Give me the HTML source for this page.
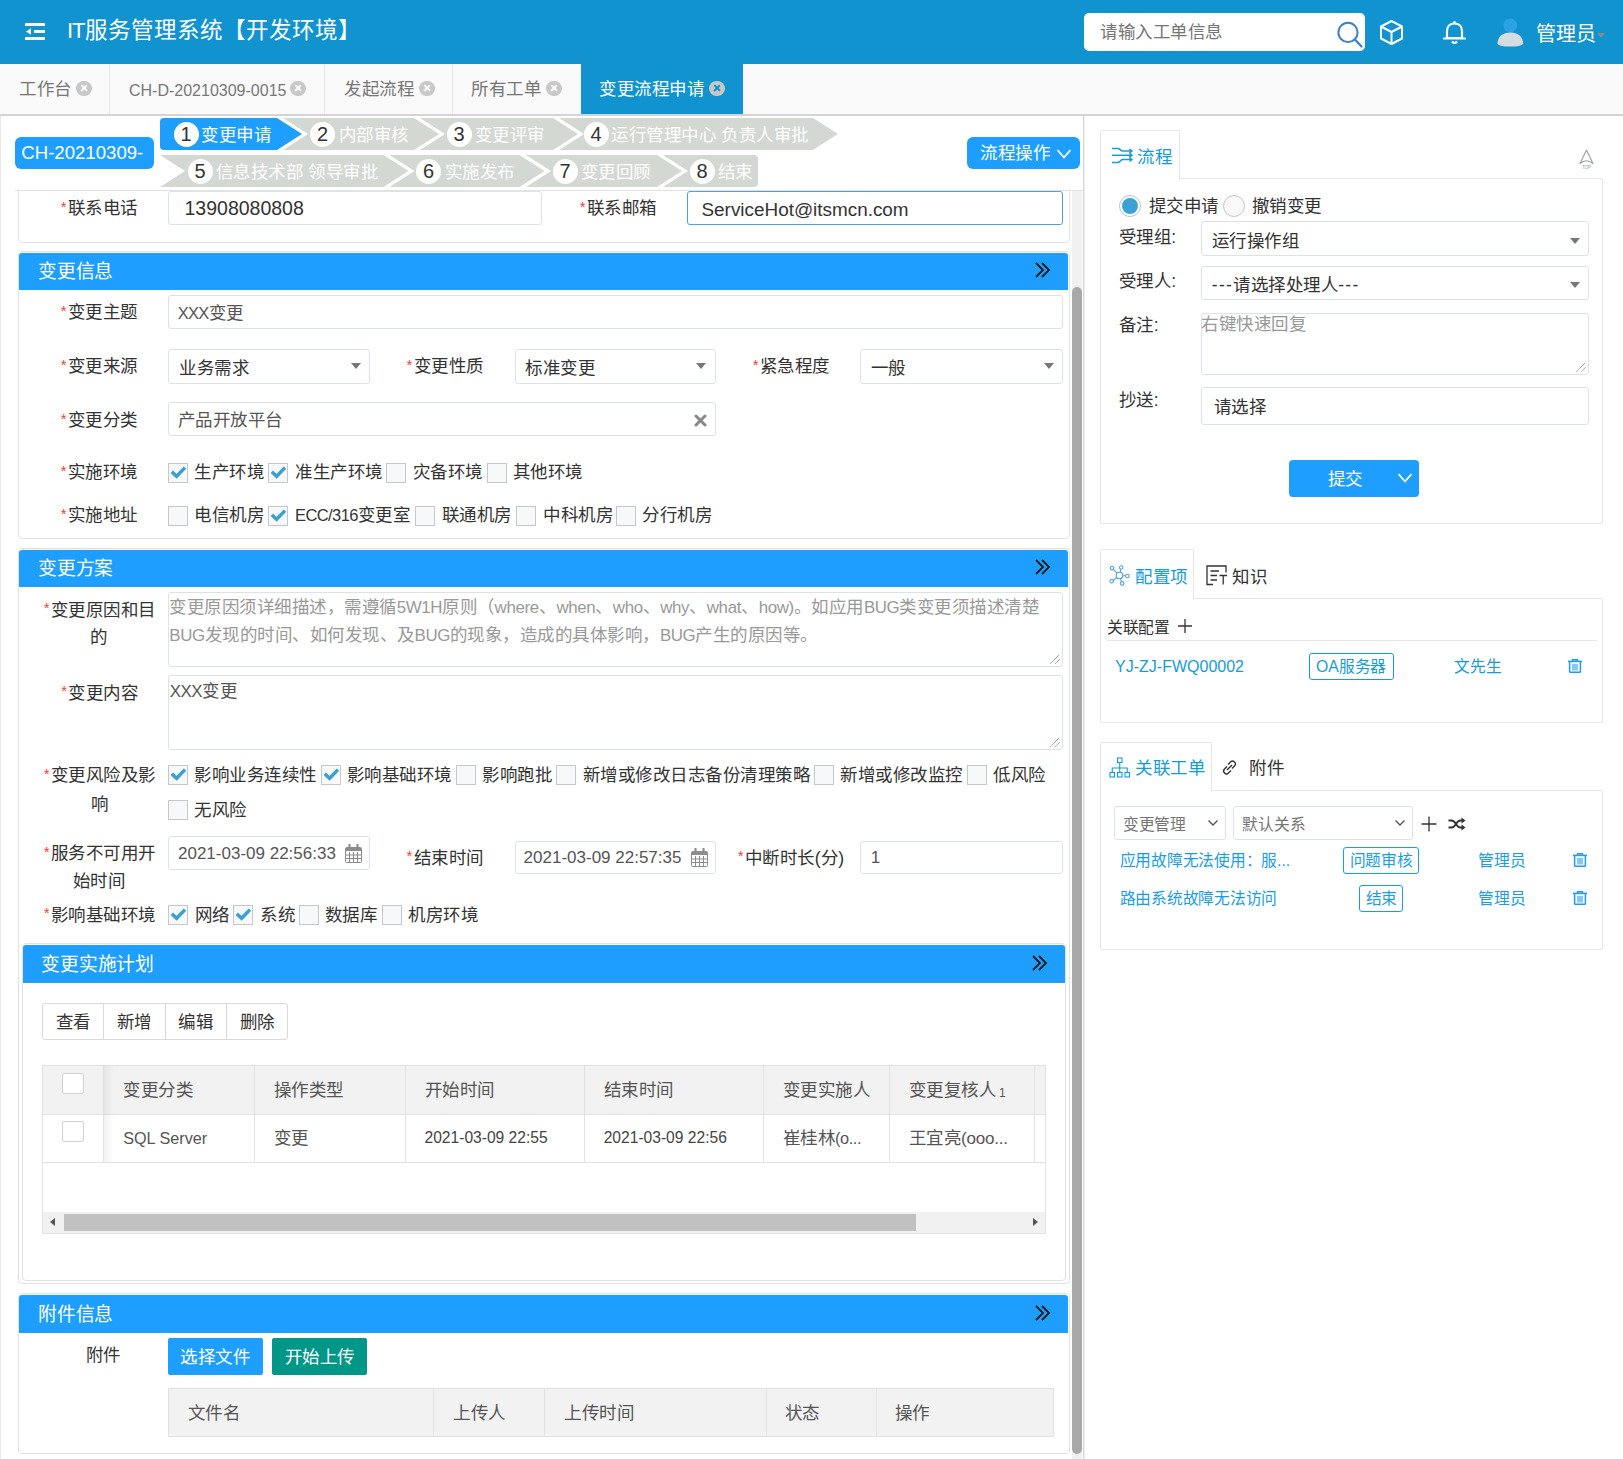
<!DOCTYPE html>
<html lang="zh-CN"><head><meta charset="utf-8">
<style>
*{box-sizing:border-box}
html,body{margin:0;padding:0}
body{width:1623px;height:1459px;position:relative;overflow:hidden;background:#fff;font-family:"Liberation Sans",sans-serif;color:#333}
.a{position:absolute;white-space:nowrap}
.t{position:absolute;white-space:nowrap;font-size:17.5px;line-height:24px;color:#333}
.hdr{left:0;top:0;width:1623px;height:64px;background:#1193cf}
.tabbar{left:0;top:64px;width:1623px;height:50px;background:#f8f8f8}
.tabline{left:0;top:114px;width:1623px;height:2px;background:#d4d4d4}
.tsep{top:64px;width:1px;height:50px;background:#e8e8e8}
.tabtxt{font-size:17.5px;line-height:24px;color:#777;top:77px}
.close{position:absolute;width:15.5px;height:15.5px;border-radius:50%;background:#c8c8c8;top:80.8px}
.close:before,.close:after{content:"";position:absolute;left:3.6px;top:6.6px;width:8.3px;height:2.3px;background:#fafafa;transform:rotate(45deg)}
.close.act:before,.close.act:after{background:#1193cf}
.close:after{transform:rotate(-45deg)}
.step{position:absolute;height:32px;background:#d3d8d3}
.circ{position:absolute;width:25px;height:25px;border-radius:50%;background:#fff;color:#333;font-size:20px;line-height:25px;text-align:center;top:3.5px}
.stxt{position:absolute;top:4px;font-size:17.5px;line-height:24px;color:#fff}
.box{position:absolute;border:1px solid #e2e2e2;border-radius:4px;background:#fff}
.sech{position:absolute;height:37px;background:#1e9fff;border-radius:3px 3px 0 0}
.sect{position:absolute;top:6px;font-size:18.75px;line-height:25px;color:#fff}
.dbl{position:absolute;top:9px;width:18px;height:18px}
.inp{position:absolute;border:1px solid #dce3e8;border-radius:3px;background:#fff}
.lbl{position:absolute;font-size:17.5px;line-height:24px;color:#333;text-align:center;white-space:nowrap}
.req{color:#ff2828;font-size:13px;vertical-align:top;position:relative;top:-1px;margin-right:1px}
.cb{position:absolute;width:20px;height:20px;border:1px solid #c2c8ce;background:#f6f8fa}
.caret{position:absolute;width:0;height:0;border-left:5px solid transparent;border-right:5px solid transparent;border-top:6px solid #777}
.ph{color:#999}

</style></head>
<body>
<div class="a" style="left:0px;top:0px;width:1623.00px;height:64.00px;background:#1193cf"></div>
<svg class="a" style="left:25px;top:22px" width="21" height="19" viewBox="0 0 21 19">
<rect x="0" y="1" width="20" height="3" fill="#fff"/>
<rect x="9" y="8" width="11" height="3" fill="#fff"/>
<rect x="0" y="15" width="20" height="3" fill="#fff"/>
<path d="M1 9.5 L6 6.3 L6 12.7 Z" fill="#fff"/>
</svg>
<div class="a" style="left:67px;top:16px;font-size:22.5px;line-height:30px;color:#fff"><span style="font-size:22px;letter-spacing:-1.2px">IT</span><span style="margin-left:1px">服务管理系统【开发环境】</span></div>
<div class="a" style="left:1084px;top:13px;width:281.00px;height:37.50px;background:#fff;border-radius:5px"></div>
<div class="a" style="left:1100px;top:20.00px;font-size:17.5px;line-height:24px;color:#757575;letter-spacing:0.5px;">请输入工单信息</div>
<svg class="a" style="left:1334px;top:19px" width="30" height="30" viewBox="0 0 30 30">
<circle cx="14" cy="13.4" r="9.6" fill="none" stroke="#3f7ec4" stroke-width="2"/>
<line x1="21" y1="20.6" x2="27.5" y2="27.5" stroke="#3f7ec4" stroke-width="2.2" stroke-linecap="round"/>
</svg>
<svg class="a" style="left:1378px;top:19px" width="27" height="27" viewBox="0 0 27 27">
<path d="M13.5 2 L24 7.5 L24 19.5 L13.5 25 L3 19.5 L3 7.5 Z M3 7.5 L13.5 13 L24 7.5 M13.5 13 L13.5 25" fill="none" stroke="#fff" stroke-width="2" stroke-linejoin="round"/>
</svg>
<svg class="a" style="left:1441px;top:19px" width="27" height="27" viewBox="0 0 27 27">
<path d="M6 19 L6 12 C6 7.5 9 4.5 13.5 4.5 C18 4.5 21 7.5 21 12 L21 19 Z" fill="none" stroke="#fff" stroke-width="2.2" stroke-linejoin="round"/>
<line x1="3" y1="19.5" x2="24" y2="19.5" stroke="#fff" stroke-width="2.2" stroke-linecap="round"/>
<path d="M11 22.5 Q13.5 25.5 16 22.5" fill="none" stroke="#fff" stroke-width="2"/>
<line x1="13.5" y1="2" x2="13.5" y2="4.5" stroke="#fff" stroke-width="2"/>
</svg>
<svg class="a" style="left:1496px;top:16px" width="30" height="32" viewBox="0 0 30 32">
<circle cx="14.3" cy="9.5" r="6.9" fill="#2aa3e6"/>
<path d="M1.5 27.5 Q2 16.8 14.3 16.4 Q26.6 16.8 27.2 27.5 Q27 30.6 14.3 30.6 Q1.6 30.6 1.5 27.5 Z" fill="#d5dde0"/>
</svg>
<div class="a" style="left:1536px;top:19.8px;font-size:20px;line-height:28px;color:#fff">管理员</div>
<div class="caret" style="left:1597px;top:33px;border-top-color:#8a8a8a;border-left-width:4px;border-right-width:4px;border-top-width:5px"></div>
<div class="a" style="left:0px;top:64px;width:1623.00px;height:50.00px;background:#fafafa"></div>
<div class="a" style="left:0px;top:114px;width:1623.00px;height:2.00px;background:#d4d4d4"></div>
<div class="a" style="left:109px;top:64px;width:1.00px;height:50.00px;background:#e8e8e8"></div>
<div class="a" style="left:324px;top:64px;width:1.00px;height:50.00px;background:#e8e8e8"></div>
<div class="a" style="left:452px;top:64px;width:1.00px;height:50.00px;background:#e8e8e8"></div>
<div class="a" style="left:19px;top:77.10px;font-size:17.5px;line-height:24px;color:#777;letter-spacing:0.5px;">工作台</div>
<div class="close" style="left:76px"></div>
<div class="a" style="left:129px;top:78.60px;font-size:16px;line-height:24px;color:#777;">CH-D-20210309-0015</div>
<div class="close" style="left:290px"></div>
<div class="a" style="left:344px;top:77.10px;font-size:17.5px;line-height:24px;color:#777;letter-spacing:0.5px;">发起流程</div>
<div class="close" style="left:419px"></div>
<div class="a" style="left:471px;top:77.10px;font-size:17.5px;line-height:24px;color:#777;letter-spacing:0.5px;">所有工单</div>
<div class="close" style="left:546px"></div>
<div class="a" style="left:581px;top:64px;width:162.00px;height:50.00px;background:#1193cf"></div>
<div class="a" style="left:599px;top:77.10px;font-size:17.5px;line-height:24px;color:#fff;letter-spacing:0.5px;">变更流程申请</div>
<div class="close act" style="left:709px"></div>
<div class="a" style="left:0px;top:116px;width:1.00px;height:1343.00px;background:#e8e8e8"></div>
<div class="a" style="left:1083px;top:116px;width:1.00px;height:1343.00px;background:#d6d6d6"></div>
<div class="a" style="left:1084px;top:116px;width:1.00px;height:1343.00px;background:#f0f0f0"></div>
<div class="a" style="left:15px;top:137px;width:139.00px;height:32.00px;background:#1e9fff;border-radius:6px"></div>
<div class="a" style="left:21.3px;top:141px;font-size:18.6px;line-height:24px;color:#fff">CH-20210309-</div>
<div class="a" style="left:967px;top:137px;width:113.00px;height:32.00px;background:#1e9fff;border-radius:6px"></div>
<div class="a" style="left:980px;top:140.80px;font-size:17.5px;line-height:24px;color:#fff;letter-spacing:0.5px;">流程操作</div>
<svg class="a" style="left:1056px;top:148px" width="16" height="12" viewBox="0 0 16 12"><path d="M1.5 2 L8 9.5 L14.5 2" fill="none" stroke="#fff" stroke-width="1.8"/></svg>
<svg class="a" style="left:0;top:0" width="900" height="200" viewBox="0 0 900 200">
<path d="M164 118 L277 118 L302 134 L277 150 L164 150 Q160 150 160 146 L160 122 Q160 118 164 118 Z" fill="#1e9fff"/>
<path d="M283 118 L414 118 L439 134 L414 150 L283 150 L308 134 Z" fill="#d3d8d3"/>
<path d="M420 118 L553 118 L578 134 L553 150 L420 150 L445 134 Z" fill="#d3d8d3"/>
<path d="M559 118 L813 118 L838 134 L813 150 L559 150 L584 134 Z" fill="#d3d8d3"/>
<path d="M160 155 L383.5 155 L408.5 171 L383.5 187 L160 187 L185 171 Z" fill="#d3d8d3"/>
<path d="M389.5 155 L519.5 155 L544.5 171 L519.5 187 L389.5 187 L414.5 171 Z" fill="#d3d8d3"/>
<path d="M526 155 L657 155 L682 171 L657 187 L526 187 L551 171 Z" fill="#d3d8d3"/>
<path d="M663 155 L754 155 Q758 155 758 159 L758 183 Q758 187 754 187 L663 187 L688 171 Z" fill="#d3d8d3"/>
</svg>
<div class="a" style="left:173.5px;top:121.5px;width:25px;height:25px;border-radius:50%;background:#fff;color:#333;font-size:20px;line-height:25px;text-align:center">1</div>
<div class="a" style="left:201px;top:123.00px;font-size:17.5px;line-height:24px;color:#fff;letter-spacing:0.5px;">变更申请</div>
<div class="a" style="left:310.0px;top:121.5px;width:25px;height:25px;border-radius:50%;background:#fff;color:#333;font-size:20px;line-height:25px;text-align:center">2</div>
<div class="a" style="left:338.5px;top:123.00px;font-size:17.5px;line-height:24px;color:#fff;letter-spacing:0.5px;">内部审核</div>
<div class="a" style="left:446.5px;top:121.5px;width:25px;height:25px;border-radius:50%;background:#fff;color:#333;font-size:20px;line-height:25px;text-align:center">3</div>
<div class="a" style="left:474.5px;top:123.00px;font-size:17.5px;line-height:24px;color:#fff;letter-spacing:0.5px;">变更评审</div>
<div class="a" style="left:583.5px;top:121.5px;width:25px;height:25px;border-radius:50%;background:#fff;color:#333;font-size:20px;line-height:25px;text-align:center">4</div>
<div class="a" style="left:611px;top:123.00px;font-size:17.5px;line-height:24px;color:#fff;letter-spacing:0.5px;">运行管理中心 负责人审批</div>
<div class="a" style="left:187.5px;top:158.5px;width:25px;height:25px;border-radius:50%;background:#fff;color:#333;font-size:20px;line-height:25px;text-align:center">5</div>
<div class="a" style="left:215.5px;top:160.00px;font-size:17.5px;line-height:24px;color:#fff;letter-spacing:0.5px;">信息技术部 领导审批</div>
<div class="a" style="left:416.0px;top:158.5px;width:25px;height:25px;border-radius:50%;background:#fff;color:#333;font-size:20px;line-height:25px;text-align:center">6</div>
<div class="a" style="left:444.5px;top:160.00px;font-size:17.5px;line-height:24px;color:#fff;letter-spacing:0.5px;">实施发布</div>
<div class="a" style="left:552.5px;top:158.5px;width:25px;height:25px;border-radius:50%;background:#fff;color:#333;font-size:20px;line-height:25px;text-align:center">7</div>
<div class="a" style="left:580.5px;top:160.00px;font-size:17.5px;line-height:24px;color:#fff;letter-spacing:0.5px;">变更回顾</div>
<div class="a" style="left:689.5px;top:158.5px;width:25px;height:25px;border-radius:50%;background:#fff;color:#333;font-size:20px;line-height:25px;text-align:center">8</div>
<div class="a" style="left:717.5px;top:160.00px;font-size:17.5px;line-height:24px;color:#fff;letter-spacing:0.5px;">结束</div>
<div class="a" style="left:15px;top:190px;width:1068.00px;height:1.00px;background:#e2e2e2"></div>
<div class="a" style="left:0;top:0;width:1083px;height:1459px;clip-path:inset(191px 0 0 0)">
<div class="a" style="left:18px;top:150px;width:1052.00px;height:93.00px;border:1px solid #e2e2e2;border-radius:4px;background:#fff"></div>
<div class="a" style="left:60.70px;top:199.00px;font-size:15px;line-height:16px;color:#f43b3b">*</div>
<div class="a" style="left:67.8px;top:196.10px;font-size:17.5px;line-height:24px;color:#333;letter-spacing:0.5px;">联系电话</div>
<div class="a" style="left:168px;top:191px;width:374.00px;height:34.00px;border:1px solid #dce3e8;border-radius:3px;background:#fff"></div>
<div class="a" style="left:184.5px;top:196.10px;font-size:19.5px;line-height:24px;color:#333;">13908080808</div>
<div class="a" style="left:579.70px;top:199.00px;font-size:15px;line-height:16px;color:#f43b3b">*</div>
<div class="a" style="left:586.8px;top:196.10px;font-size:17.5px;line-height:24px;color:#333;letter-spacing:0.5px;">联系邮箱</div>
<div class="a" style="left:687px;top:191px;width:376.00px;height:34.00px;border:1px solid #4aa2df;border-radius:3px;background:#fff"></div>
<div class="a" style="left:701.5px;top:197.50px;font-size:18.9px;line-height:24px;color:#333;">ServiceHot@itsmcn.com</div>
<div class="a" style="left:18px;top:251px;width:1052.00px;height:288.00px;border:1px solid #e2e2e2;border-radius:4px;background:#fff"></div>
<div class="a" style="left:19px;top:253px;width:1049.00px;height:37.00px;background:#1e9fff;border-radius:3px 3px 0 0"></div>
<div class="a" style="left:38px;top:260.00px;font-size:18.75px;line-height:24px;color:#fff;letter-spacing:-0.25px;">变更信息</div>
<svg class="a" style="left:1034px;top:261.0px" width="18" height="18" viewBox="0 0 18 18"><path d="M2 2 L9 9 L2 16 M8 2 L15 9 L8 16" fill="none" stroke="#1a1a1a" stroke-width="1.8"/></svg>
<div class="a" style="left:60.70px;top:302.90px;font-size:15px;line-height:16px;color:#f43b3b">*</div>
<div class="a" style="left:67.8px;top:300.00px;font-size:17.5px;line-height:24px;color:#333;letter-spacing:0.5px;">变更主题</div>
<div class="a" style="left:168px;top:295px;width:895.00px;height:34.00px;border:1px solid #dce3e8;border-radius:3px;background:#fff"></div>
<div class="a" style="left:177.7px;top:301.00px;font-size:17.5px;line-height:24px;color:#555;letter-spacing:0.5px;"><span style="letter-spacing:-0.67px;font-size:16.50px">XXX</span>变更</div>
<div class="a" style="left:60.70px;top:357.20px;font-size:15px;line-height:16px;color:#f43b3b">*</div>
<div class="a" style="left:67.8px;top:354.30px;font-size:17.5px;line-height:24px;color:#333;letter-spacing:0.5px;">变更来源</div>
<div class="a" style="left:168px;top:349px;width:202.00px;height:35.00px;border:1px solid #dce3e8;border-radius:3px;background:#fff"></div>
<div class="a" style="left:179.2px;top:356.10px;font-size:17.5px;line-height:24px;color:#333;letter-spacing:0.5px;">业务需求</div>
<div class="caret" style="left:350.7px;top:363.3px"></div>
<div class="a" style="left:406.40px;top:357.20px;font-size:15px;line-height:16px;color:#f43b3b">*</div>
<div class="a" style="left:413.5px;top:354.30px;font-size:17.5px;line-height:24px;color:#333;letter-spacing:0.5px;">变更性质</div>
<div class="a" style="left:514.5px;top:349px;width:201.50px;height:35.00px;border:1px solid #dce3e8;border-radius:3px;background:#fff"></div>
<div class="a" style="left:525.3px;top:356.10px;font-size:17.5px;line-height:24px;color:#333;letter-spacing:0.5px;">标准变更</div>
<div class="caret" style="left:696.3px;top:363.3px"></div>
<div class="a" style="left:752.70px;top:357.20px;font-size:15px;line-height:16px;color:#f43b3b">*</div>
<div class="a" style="left:759.8px;top:354.30px;font-size:17.5px;line-height:24px;color:#333;letter-spacing:0.5px;">紧急程度</div>
<div class="a" style="left:860px;top:349px;width:203.00px;height:35.00px;border:1px solid #dce3e8;border-radius:3px;background:#fff"></div>
<div class="a" style="left:870.8px;top:356.10px;font-size:17.5px;line-height:24px;color:#333;letter-spacing:0.5px;">一般</div>
<div class="caret" style="left:1043.5px;top:363.3px"></div>
<div class="a" style="left:60.70px;top:410.50px;font-size:15px;line-height:16px;color:#f43b3b">*</div>
<div class="a" style="left:67.8px;top:407.60px;font-size:17.5px;line-height:24px;color:#333;letter-spacing:0.5px;">变更分类</div>
<div class="a" style="left:168px;top:402px;width:548.00px;height:34.00px;border:1px solid #dce3e8;border-radius:3px;background:#fff"></div>
<div class="a" style="left:177.7px;top:408.00px;font-size:17.5px;line-height:24px;color:#555;letter-spacing:0.5px;">产品开放平台</div>
<svg class="a" style="left:694px;top:413.5px" width="13" height="13" viewBox="0 0 13 13"><path d="M2 2 L11 11 M11 2 L2 11" stroke="#888" stroke-width="3" stroke-linecap="round"/></svg>
<div class="a" style="left:60.70px;top:463.30px;font-size:15px;line-height:16px;color:#f43b3b">*</div>
<div class="a" style="left:67.8px;top:460.40px;font-size:17.5px;line-height:24px;color:#333;letter-spacing:0.5px;">实施环境</div>
<div class="cb" style="left:168px;top:463px"><svg width="18" height="18" viewBox="0 0 18 18" style="position:absolute;left:0;top:0"><path d="M2.8 7.8 L7.6 12.3 L16 3.6" fill="none" stroke="#3aa0d3" stroke-width="3.4" stroke-linejoin="miter" stroke-linecap="butt"/></svg></div>
<div class="a" style="left:194.4px;top:460.00px;font-size:17.5px;line-height:24px;color:#333;letter-spacing:0.5px;">生产环境</div>
<div class="cb" style="left:268.3px;top:463px"><svg width="18" height="18" viewBox="0 0 18 18" style="position:absolute;left:0;top:0"><path d="M2.8 7.8 L7.6 12.3 L16 3.6" fill="none" stroke="#3aa0d3" stroke-width="3.4" stroke-linejoin="miter" stroke-linecap="butt"/></svg></div>
<div class="a" style="left:295px;top:460.00px;font-size:17.5px;line-height:24px;color:#333;letter-spacing:0.5px;">准生产环境</div>
<div class="cb" style="left:386.2px;top:463px"></div>
<div class="a" style="left:412.5px;top:460.00px;font-size:17.5px;line-height:24px;color:#333;letter-spacing:0.5px;">灾备环境</div>
<div class="cb" style="left:486.5px;top:463px"></div>
<div class="a" style="left:512.8px;top:460.00px;font-size:17.5px;line-height:24px;color:#333;letter-spacing:0.5px;">其他环境</div>
<div class="a" style="left:60.70px;top:506.10px;font-size:15px;line-height:16px;color:#f43b3b">*</div>
<div class="a" style="left:67.8px;top:503.20px;font-size:17.5px;line-height:24px;color:#333;letter-spacing:0.5px;">实施地址</div>
<div class="cb" style="left:168px;top:506px"></div>
<div class="a" style="left:194.4px;top:503.00px;font-size:17.5px;line-height:24px;color:#333;letter-spacing:0.5px;">电信机房</div>
<div class="cb" style="left:268.3px;top:506px"><svg width="18" height="18" viewBox="0 0 18 18" style="position:absolute;left:0;top:0"><path d="M2.8 7.8 L7.6 12.3 L16 3.6" fill="none" stroke="#3aa0d3" stroke-width="3.4" stroke-linejoin="miter" stroke-linecap="butt"/></svg></div>
<div class="a" style="left:295px;top:503.00px;font-size:17.5px;line-height:24px;color:#333;letter-spacing:0.5px;"><span style="letter-spacing:-0.58px;font-size:16.50px">ECC/316</span>变更室</div>
<div class="cb" style="left:415.2px;top:506px"></div>
<div class="a" style="left:441.5px;top:503.00px;font-size:17.5px;line-height:24px;color:#333;letter-spacing:0.5px;">联通机房</div>
<div class="cb" style="left:515.9px;top:506px"></div>
<div class="a" style="left:543px;top:503.00px;font-size:17.5px;line-height:24px;color:#333;letter-spacing:0.5px;">中科机房</div>
<div class="cb" style="left:616.3px;top:506px"></div>
<div class="a" style="left:642.2px;top:503.00px;font-size:17.5px;line-height:24px;color:#333;letter-spacing:0.5px;">分行机房</div>
<div class="a" style="left:18px;top:548px;width:1052.00px;height:736.00px;border:1px solid #e2e2e2;border-radius:4px;background:#fff"></div>
<div class="a" style="left:19px;top:550px;width:1049.00px;height:37.00px;background:#1e9fff;border-radius:3px 3px 0 0"></div>
<div class="a" style="left:38px;top:557.00px;font-size:18.75px;line-height:24px;color:#fff;letter-spacing:-0.25px;">变更方案</div>
<svg class="a" style="left:1034px;top:558.0px" width="18" height="18" viewBox="0 0 18 18"><path d="M2 2 L9 9 L2 16 M8 2 L15 9 L8 16" fill="none" stroke="#1a1a1a" stroke-width="1.8"/></svg>
<div class="a" style="left:43.70px;top:600.40px;font-size:15px;line-height:16px;color:#f43b3b">*</div>
<div class="a" style="left:50.8px;top:597.50px;font-size:17.5px;line-height:24px;color:#333;letter-spacing:0.5px;">变更原因和目</div>
<div class="a" style="left:89.8px;top:625.10px;font-size:17.5px;line-height:24px;color:#333;letter-spacing:0.5px;">的</div>
<div class="a" style="left:168px;top:592px;width:895.00px;height:74.50px;border:1px solid #dce3e8;border-radius:3px;background:#fff"></div>
<svg class="a" style="left:1049px;top:653px" width="12" height="12" viewBox="0 0 12 12"><path d="M1.5 10.5 L10.5 1.5 M6.5 10.5 L10.5 6.5" stroke="#6a6a6a" stroke-width="1" stroke-dasharray="1 0.6"/></svg>
<div class="a" style="left:169.3px;top:595.40px;font-size:17.5px;line-height:24px;color:#999;letter-spacing:0.5px;">变更原因须详细描述，需遵循<span style="letter-spacing:-0.42px;font-size:16.90px">5W1H</span>原则（<span style="letter-spacing:-0.33px;font-size:16.90px">where</span>、<span style="letter-spacing:-0.36px;font-size:16.90px">when</span>、<span style="letter-spacing:-0.37px;font-size:16.90px">who</span>、<span style="letter-spacing:-0.36px;font-size:16.90px">why</span>、<span style="letter-spacing:-0.32px;font-size:16.90px">what</span>、<span style="letter-spacing:-0.33px;font-size:16.90px">how)</span>。如应用<span style="letter-spacing:-0.43px;font-size:16.90px">BUG</span>类变更须描述清楚</div>
<div class="a" style="left:169.3px;top:623.40px;font-size:17.5px;line-height:24px;color:#999;letter-spacing:0.5px;"><span style="letter-spacing:-0.43px;font-size:16.90px">BUG</span>发现的时间、如何发现、及<span style="letter-spacing:-0.43px;font-size:16.90px">BUG</span>的现象，造成的具体影响，<span style="letter-spacing:-0.43px;font-size:16.90px">BUG</span>产生的原因等。</div>
<div class="a" style="left:61.20px;top:683.40px;font-size:15px;line-height:16px;color:#f43b3b">*</div>
<div class="a" style="left:68.3px;top:680.50px;font-size:17.5px;line-height:24px;color:#333;letter-spacing:0.5px;">变更内容</div>
<div class="a" style="left:168px;top:675px;width:895.00px;height:74.50px;border:1px solid #dce3e8;border-radius:3px;background:#fff"></div>
<svg class="a" style="left:1049px;top:736px" width="12" height="12" viewBox="0 0 12 12"><path d="M1.5 10.5 L10.5 1.5 M6.5 10.5 L10.5 6.5" stroke="#6a6a6a" stroke-width="1" stroke-dasharray="1 0.6"/></svg>
<div class="a" style="left:169.7px;top:678.50px;font-size:17.5px;line-height:24px;color:#555;letter-spacing:0.5px;"><span style="letter-spacing:-0.43px;font-size:16.85px">XXX</span>变更</div>
<div class="a" style="left:43.70px;top:766.00px;font-size:15px;line-height:16px;color:#f43b3b">*</div>
<div class="a" style="left:50.8px;top:763.10px;font-size:17.5px;line-height:24px;color:#333;letter-spacing:0.5px;">变更风险及影</div>
<div class="a" style="left:90.5px;top:791.50px;font-size:17.5px;line-height:24px;color:#333;letter-spacing:0.5px;">响</div>
<div class="cb" style="left:168.3px;top:765px"><svg width="18" height="18" viewBox="0 0 18 18" style="position:absolute;left:0;top:0"><path d="M2.8 7.8 L7.6 12.3 L16 3.6" fill="none" stroke="#3aa0d3" stroke-width="3.4" stroke-linejoin="miter" stroke-linecap="butt"/></svg></div>
<div class="a" style="left:194.2px;top:763.00px;font-size:17.5px;line-height:24px;color:#333;letter-spacing:0.5px;">影响业务连续性</div>
<div class="cb" style="left:321px;top:765px"><svg width="18" height="18" viewBox="0 0 18 18" style="position:absolute;left:0;top:0"><path d="M2.8 7.8 L7.6 12.3 L16 3.6" fill="none" stroke="#3aa0d3" stroke-width="3.4" stroke-linejoin="miter" stroke-linecap="butt"/></svg></div>
<div class="a" style="left:346.8px;top:763.00px;font-size:17.5px;line-height:24px;color:#333;letter-spacing:0.5px;">影响基础环境</div>
<div class="cb" style="left:456px;top:765px"></div>
<div class="a" style="left:482.2px;top:763.00px;font-size:17.5px;line-height:24px;color:#333;letter-spacing:0.5px;">影响跑批</div>
<div class="cb" style="left:556px;top:765px"></div>
<div class="a" style="left:582.7px;top:763.00px;font-size:17.5px;line-height:24px;color:#333;letter-spacing:0.5px;">新增或修改日志备份清理策略</div>
<div class="cb" style="left:813.9px;top:765px"></div>
<div class="a" style="left:840.2px;top:763.00px;font-size:17.5px;line-height:24px;color:#333;letter-spacing:0.5px;">新增或修改监控</div>
<div class="cb" style="left:967.4px;top:765px"></div>
<div class="a" style="left:993.3px;top:763.00px;font-size:17.5px;line-height:24px;color:#333;letter-spacing:0.5px;">低风险</div>
<div class="cb" style="left:168.3px;top:800px"></div>
<div class="a" style="left:194.2px;top:798.00px;font-size:17.5px;line-height:24px;color:#333;letter-spacing:0.5px;">无风险</div>
<div class="a" style="left:43.70px;top:843.70px;font-size:15px;line-height:16px;color:#f43b3b">*</div>
<div class="a" style="left:50.8px;top:840.80px;font-size:17.5px;line-height:24px;color:#333;letter-spacing:0.5px;">服务不可用开</div>
<div class="a" style="left:72.7px;top:869.10px;font-size:17.5px;line-height:24px;color:#333;letter-spacing:0.5px;">始时间</div>
<div class="a" style="left:168px;top:836px;width:202.00px;height:34.00px;border:1px solid #dce3e8;border-radius:3px;background:#fff"></div>
<div class="a" style="left:178px;top:841.50px;font-size:17px;line-height:24px;color:#555;">2021-03-09 22:56:33</div>
<svg class="a" style="left:345px;top:844px" width="17" height="19" viewBox="0 0 17 19"><g fill="none" stroke="#8c8c8c"><rect x="0.5" y="3.5" width="16" height="15" rx="1" stroke-width="1"/><path d="M0.5 5.5 L16.5 5.5" stroke-width="3"/><path d="M4.5 8 L4.5 18 M8.5 8 L8.5 18 M12.5 8 L12.5 18 M1 11 L16 11 M1 14.5 L16 14.5" stroke-width="1"/><path d="M4.5 0.8 L4.5 5 M12.5 0.8 L12.5 5" stroke-width="2.2" stroke-linecap="round"/></g></svg>
<div class="a" style="left:406.40px;top:848.40px;font-size:15px;line-height:16px;color:#f43b3b">*</div>
<div class="a" style="left:413.5px;top:845.50px;font-size:17.5px;line-height:24px;color:#333;letter-spacing:0.5px;">结束时间</div>
<div class="a" style="left:514.5px;top:840.5px;width:201.50px;height:33.50px;border:1px solid #dce3e8;border-radius:3px;background:#fff"></div>
<div class="a" style="left:523.6px;top:846.00px;font-size:17px;line-height:24px;color:#555;">2021-03-09 22:57:35</div>
<svg class="a" style="left:691px;top:848px" width="17" height="19" viewBox="0 0 17 19"><g fill="none" stroke="#8c8c8c"><rect x="0.5" y="3.5" width="16" height="15" rx="1" stroke-width="1"/><path d="M0.5 5.5 L16.5 5.5" stroke-width="3"/><path d="M4.5 8 L4.5 18 M8.5 8 L8.5 18 M12.5 8 L12.5 18 M1 11 L16 11 M1 14.5 L16 14.5" stroke-width="1"/><path d="M4.5 0.8 L4.5 5 M12.5 0.8 L12.5 5" stroke-width="2.2" stroke-linecap="round"/></g></svg>
<div class="a" style="left:737.70px;top:848.40px;font-size:15px;line-height:16px;color:#f43b3b">*</div>
<div class="a" style="left:744.8px;top:845.50px;font-size:17.5px;line-height:24px;color:#333;letter-spacing:0.5px;">中断时长<span style="letter-spacing:0">(</span>分<span style="letter-spacing:0">)</span></div>
<div class="a" style="left:860px;top:840.5px;width:203.00px;height:33.50px;border:1px solid #dce3e8;border-radius:3px;background:#fff"></div>
<div class="a" style="left:870.8px;top:846.00px;font-size:17px;line-height:24px;color:#555;">1</div>
<div class="a" style="left:43.70px;top:905.40px;font-size:15px;line-height:16px;color:#f43b3b">*</div>
<div class="a" style="left:50.8px;top:902.50px;font-size:17.5px;line-height:24px;color:#333;letter-spacing:0.5px;">影响基础环境</div>
<div class="cb" style="left:168.3px;top:905px"><svg width="18" height="18" viewBox="0 0 18 18" style="position:absolute;left:0;top:0"><path d="M2.8 7.8 L7.6 12.3 L16 3.6" fill="none" stroke="#3aa0d3" stroke-width="3.4" stroke-linejoin="miter" stroke-linecap="butt"/></svg></div>
<div class="a" style="left:194.7px;top:903.00px;font-size:17.5px;line-height:24px;color:#333;letter-spacing:0.5px;">网络</div>
<div class="cb" style="left:233.2px;top:905px"><svg width="18" height="18" viewBox="0 0 18 18" style="position:absolute;left:0;top:0"><path d="M2.8 7.8 L7.6 12.3 L16 3.6" fill="none" stroke="#3aa0d3" stroke-width="3.4" stroke-linejoin="miter" stroke-linecap="butt"/></svg></div>
<div class="a" style="left:260px;top:903.00px;font-size:17.5px;line-height:24px;color:#333;letter-spacing:0.5px;">系统</div>
<div class="cb" style="left:299px;top:905px"></div>
<div class="a" style="left:324.8px;top:903.00px;font-size:17.5px;line-height:24px;color:#333;letter-spacing:0.5px;">数据库</div>
<div class="cb" style="left:381.5px;top:905px"></div>
<div class="a" style="left:408px;top:903.00px;font-size:17.5px;line-height:24px;color:#333;letter-spacing:0.5px;">机房环境</div>
<div class="a" style="left:22px;top:943px;width:1044.00px;height:338.00px;border:1px solid #e2e2e2;border-radius:4px;background:#fff"></div>
<div class="a" style="left:23px;top:945px;width:1042.00px;height:38.00px;background:#1e9fff;border-radius:3px 3px 0 0"></div>
<div class="a" style="left:41.4px;top:952.50px;font-size:18.75px;line-height:24px;color:#fff;letter-spacing:-0.25px;">变更实施计划</div>
<svg class="a" style="left:1031px;top:953.5px" width="18" height="18" viewBox="0 0 18 18"><path d="M2 2 L9 9 L2 16 M8 2 L15 9 L8 16" fill="none" stroke="#1a1a1a" stroke-width="1.8"/></svg>
<div class="a" style="left:42px;top:1003px;width:246.00px;height:36.50px;border:1px solid #d9d9d9;border-radius:3px;background:#fff"></div>
<div class="a" style="left:103px;top:1004px;width:1.00px;height:35.00px;background:#d9d9d9"></div>
<div class="a" style="left:165px;top:1004px;width:1.00px;height:35.00px;background:#d9d9d9"></div>
<div class="a" style="left:226px;top:1004px;width:1.00px;height:35.00px;background:#d9d9d9"></div>
<div class="a" style="left:55.8px;top:1010.00px;font-size:17.5px;line-height:24px;color:#333;letter-spacing:0.5px;">查看</div>
<div class="a" style="left:116.8px;top:1010.00px;font-size:17.5px;line-height:24px;color:#333;letter-spacing:0.5px;">新增</div>
<div class="a" style="left:178.2px;top:1010.00px;font-size:17.5px;line-height:24px;color:#333;letter-spacing:0.5px;">编辑</div>
<div class="a" style="left:239.5px;top:1010.00px;font-size:17.5px;line-height:24px;color:#333;letter-spacing:0.5px;">删除</div>
<div class="a" style="left:42px;top:1065px;width:1004.00px;height:169.00px;border:1px solid #e2e2e2;background:#fff"></div>
<div class="a" style="left:43px;top:1066px;width:1002.00px;height:48.00px;background:#f2f2f2"></div>
<div class="a" style="left:43px;top:1114px;width:1002.00px;height:1.00px;background:#e2e2e2"></div>
<div class="a" style="left:43px;top:1162px;width:1002.00px;height:1.00px;background:#e2e2e2"></div>
<div class="a" style="left:103px;top:1066px;width:1.00px;height:96.00px;background:#e2e2e2"></div>
<div class="a" style="left:254px;top:1066px;width:1.00px;height:96.00px;background:#e2e2e2"></div>
<div class="a" style="left:405px;top:1066px;width:1.00px;height:96.00px;background:#e2e2e2"></div>
<div class="a" style="left:584px;top:1066px;width:1.00px;height:96.00px;background:#e2e2e2"></div>
<div class="a" style="left:763px;top:1066px;width:1.00px;height:96.00px;background:#e2e2e2"></div>
<div class="a" style="left:889px;top:1066px;width:1.00px;height:96.00px;background:#e2e2e2"></div>
<div class="a" style="left:1034px;top:1066px;width:1.00px;height:96.00px;background:#e2e2e2"></div>
<div class="a" style="left:104px;top:1066px;width:10.00px;height:96.00px;background:linear-gradient(to right,rgba(0,0,0,0.05),rgba(0,0,0,0))"></div>
<div class="a" style="left:62px;top:1072.5px;width:21.5px;height:21px;border:1px solid #d2d2d2;border-radius:2px;background:#fff"></div>
<div class="a" style="left:62px;top:1120.5px;width:21.5px;height:21px;border:1px solid #d2d2d2;border-radius:2px;background:#fff"></div>
<div class="a" style="left:123.2px;top:1077.50px;font-size:17.5px;line-height:24px;color:#555;letter-spacing:0.5px;">变更分类</div>
<div class="a" style="left:273.6px;top:1077.50px;font-size:17.5px;line-height:24px;color:#555;letter-spacing:0.5px;">操作类型</div>
<div class="a" style="left:424.5px;top:1077.50px;font-size:17.5px;line-height:24px;color:#555;letter-spacing:0.5px;">开始时间</div>
<div class="a" style="left:603.7px;top:1077.50px;font-size:17.5px;line-height:24px;color:#555;letter-spacing:0.5px;">结束时间</div>
<div class="a" style="left:782.6px;top:1077.50px;font-size:17.5px;line-height:24px;color:#555;letter-spacing:0.5px;">变更实施人</div>
<div class="a" style="left:908.5px;top:1077.50px;font-size:17.5px;line-height:24px;color:#555;"><span style="letter-spacing:0.5px">变更复核人</span><span style="font-size:12px;position:relative;top:1px;margin-left:3px">1</span></div>
<div class="a" style="left:123.2px;top:1125.50px;font-size:16.2px;line-height:24px;color:#555;">SQL Server</div>
<div class="a" style="left:273.6px;top:1125.50px;font-size:17.5px;line-height:24px;color:#555;letter-spacing:0.5px;">变更</div>
<div class="a" style="left:424.5px;top:1125.50px;font-size:15.6px;line-height:24px;color:#444;">2021-03-09 22:55</div>
<div class="a" style="left:603.7px;top:1125.50px;font-size:15.6px;line-height:24px;color:#444;">2021-03-09 22:56</div>
<div class="a" style="left:782.6px;top:1125.50px;font-size:17.5px;line-height:24px;color:#555;letter-spacing:0.5px;">崔桂林<span style="letter-spacing:-0.41px;font-size:16.30px">(o...</span></div>
<div class="a" style="left:908.5px;top:1125.50px;font-size:17.5px;line-height:24px;color:#555;letter-spacing:0.5px;">王宜亮<span style="letter-spacing:-0.20px;font-size:17.00px">(ooo...</span></div>
<div class="a" style="left:43px;top:1212px;width:1002.00px;height:21.00px;background:#f1f1f1"></div>
<div class="a" style="left:64px;top:1214px;width:852.00px;height:17.00px;background:#c1c1c1"></div>
<div class="a" style="left:50px;top:1218px;width:0;height:0;border-top:4.5px solid transparent;border-bottom:4.5px solid transparent;border-right:5px solid #555"></div>
<div class="a" style="left:1033px;top:1218px;width:0;height:0;border-top:4.5px solid transparent;border-bottom:4.5px solid transparent;border-left:5px solid #555"></div>
<div class="a" style="left:18px;top:1293px;width:1052.00px;height:161.00px;border:1px solid #e2e2e2;border-radius:4px;background:#fff"></div>
<div class="a" style="left:19px;top:1295px;width:1049.00px;height:38.00px;background:#1e9fff;border-radius:3px 3px 0 0"></div>
<div class="a" style="left:38.2px;top:1302.50px;font-size:18.75px;line-height:24px;color:#fff;letter-spacing:-0.25px;">附件信息</div>
<svg class="a" style="left:1034px;top:1303.5px" width="18" height="18" viewBox="0 0 18 18"><path d="M2 2 L9 9 L2 16 M8 2 L15 9 L8 16" fill="none" stroke="#1a1a1a" stroke-width="1.8"/></svg>
<div class="a" style="left:85.6px;top:1342.50px;font-size:17.5px;line-height:24px;color:#333;letter-spacing:0.5px;">附件</div>
<div class="a" style="left:168px;top:1338px;width:95.00px;height:37.00px;background:#1e9fff;border-radius:2px"></div>
<div class="a" style="left:180.2px;top:1345.00px;font-size:17.5px;line-height:24px;color:#fff;letter-spacing:0.5px;">选择文件</div>
<div class="a" style="left:272px;top:1338px;width:95.00px;height:37.00px;background:#009688;border-radius:2px"></div>
<div class="a" style="left:284.6px;top:1345.00px;font-size:17.5px;line-height:24px;color:#fff;letter-spacing:0.5px;">开始上传</div>
<div class="a" style="left:168px;top:1388px;width:886.00px;height:49.00px;border:1px solid #e2e2e2;background:#f2f2f2"></div>
<div class="a" style="left:433px;top:1389px;width:1.00px;height:47.00px;background:#e2e2e2"></div>
<div class="a" style="left:544px;top:1389px;width:1.00px;height:47.00px;background:#e2e2e2"></div>
<div class="a" style="left:765.5px;top:1389px;width:1.00px;height:47.00px;background:#e2e2e2"></div>
<div class="a" style="left:876px;top:1389px;width:1.00px;height:47.00px;background:#e2e2e2"></div>
<div class="a" style="left:187.6px;top:1400.50px;font-size:17.5px;line-height:24px;color:#555;letter-spacing:0.5px;">文件名</div>
<div class="a" style="left:453.4px;top:1400.50px;font-size:17.5px;line-height:24px;color:#555;letter-spacing:0.5px;">上传人</div>
<div class="a" style="left:564.4px;top:1400.50px;font-size:17.5px;line-height:24px;color:#555;letter-spacing:0.5px;">上传时间</div>
<div class="a" style="left:784.8px;top:1400.50px;font-size:17.5px;line-height:24px;color:#555;letter-spacing:0.5px;">状态</div>
<div class="a" style="left:894.6px;top:1400.50px;font-size:17.5px;line-height:24px;color:#555;letter-spacing:0.5px;">操作</div>
</div>
<div class="a" style="left:1072px;top:191px;width:10.00px;height:1268.00px;background:#f1f1f1"></div>
<div class="a" style="left:1072px;top:287px;width:10.00px;height:1167.00px;background:#a8a8a8;border-radius:5px"></div>
<div class="a" style="left:1100px;top:178px;width:503.00px;height:346.00px;border:1px solid #e6e6e6;border-radius:0 2px 2px 2px;background:#fff"></div>
<div class="a" style="left:1099.5px;top:129.5px;width:80.50px;height:50.00px;border:1px solid #e6e6e6;border-bottom:none;border-radius:2px 2px 0 0;background:#fff"></div>
<svg class="a" style="left:1110px;top:145px" width="25" height="20" viewBox="0 0 25 20"><g fill="none" stroke="#179bd7" stroke-width="1.5"><path d="M1.9 3.6 L7.8 3.6 Q9.3 3.6 10.3 4.8 Q11.3 6.1 13 6.1 L21.6 6.1"/><path d="M1.9 10.3 L21.6 10.3"/><path d="M1.9 17.4 L7.8 17.4 Q9.3 17.4 10.3 16 Q11.3 14.5 13 14.5 L21.6 14.5"/><path d="M19.4 4.1 L21.9 6.1 L19.4 8.1 M19.4 8.3 L21.9 10.3 L19.4 12.3 M19.4 12.5 L21.9 14.5 L19.4 16.5"/></g></svg>
<div class="a" style="left:1137.3px;top:144.70px;font-size:17.5px;line-height:24px;color:#179bd7;letter-spacing:0.5px;">流程</div>
<svg class="a" style="left:1578px;top:148px" width="18" height="22" viewBox="0 0 18 22"><path d="M8.5 2 L2 15.5 Q8.5 10 15 15.5 Z" fill="none" stroke="#9aa0a6" stroke-width="1.1" stroke-linejoin="round"/><text x="8.5" y="20.5" font-size="4.5" text-anchor="middle" fill="#9aa0a6" font-family="Liberation Sans">TOP</text></svg>
<div class="a" style="left:1119px;top:195px;width:22px;height:22px;border-radius:50%;border:1px solid #b9c3c9;background:#fff"></div>
<div class="a" style="left:1122px;top:198px;width:16px;height:16px;border-radius:50%;background:#3ba2d6"></div>
<div class="a" style="left:1148.5px;top:193.50px;font-size:17.5px;line-height:24px;color:#333;letter-spacing:0.5px;">提交申请</div>
<div class="a" style="left:1222.7px;top:195px;width:22px;height:22px;border-radius:50%;border:1px solid #c6c6c6;background:#f9f9f9"></div>
<div class="a" style="left:1251.8px;top:193.50px;font-size:17.5px;line-height:24px;color:#333;letter-spacing:0.5px;">撤销变更</div>
<div class="a" style="left:1118.8px;top:225.00px;font-size:17.5px;line-height:24px;color:#333;letter-spacing:0.5px;">受理组<span style="letter-spacing:0">:</span></div>
<div class="a" style="left:1200.5px;top:221px;width:388.50px;height:34.50px;border:1px solid #dce3e8;border-radius:3px;background:#fff"></div>
<div class="a" style="left:1211.8px;top:228.50px;font-size:17.5px;line-height:24px;color:#333;letter-spacing:0.5px;">运行操作组</div>
<div class="caret" style="left:1569.5px;top:237.5px"></div>
<div class="a" style="left:1118.8px;top:268.70px;font-size:17.5px;line-height:24px;color:#333;letter-spacing:0.5px;">受理人<span style="letter-spacing:0">:</span></div>
<div class="a" style="left:1200.5px;top:265.5px;width:388.50px;height:34.50px;border:1px solid #dce3e8;border-radius:3px;background:#fff"></div>
<div class="a" style="left:1211.8px;top:272.50px;font-size:17.5px;line-height:24px;color:#333;"><span style="letter-spacing:1.3px">---</span><span style="letter-spacing:0.5px">请选择处理人</span><span style="letter-spacing:1.3px">---</span></div>
<div class="caret" style="left:1569.5px;top:281.5px"></div>
<div class="a" style="left:1118.8px;top:312.50px;font-size:17.5px;line-height:24px;color:#333;letter-spacing:0.5px;">备注<span style="letter-spacing:0">:</span></div>
<div class="a" style="left:1200.5px;top:312.5px;width:388.50px;height:62.00px;border:1px solid #dce3e8;border-radius:3px;background:#fff"></div>
<div class="a" style="left:1201px;top:311.90px;font-size:17.5px;line-height:24px;color:#999;letter-spacing:0.5px;">右键快速回复</div>
<svg class="a" style="left:1575px;top:361px" width="12" height="12" viewBox="0 0 12 12"><path d="M1.5 10.5 L10.5 1.5 M6.5 10.5 L10.5 6.5" stroke="#6a6a6a" stroke-width="1" stroke-dasharray="1 0.6"/></svg>
<div class="a" style="left:1118.8px;top:387.90px;font-size:17.5px;line-height:24px;color:#333;letter-spacing:0.5px;">抄送<span style="letter-spacing:0">:</span></div>
<div class="a" style="left:1200.5px;top:387px;width:388.50px;height:37.50px;border:1px solid #dce3e8;border-radius:3px;background:#fff"></div>
<div class="a" style="left:1213.8px;top:394.50px;font-size:17.5px;line-height:24px;color:#333;letter-spacing:0.5px;">请选择</div>
<div class="a" style="left:1289px;top:460px;width:130.00px;height:36.50px;background:#1e9fff;border-radius:4px"></div>
<div class="a" style="left:1327.6px;top:466.80px;font-size:17.5px;line-height:24px;color:#fff;letter-spacing:0.5px;">提交</div>
<svg class="a" style="left:1397px;top:472px" width="16" height="12" viewBox="0 0 16 12"><path d="M1.5 2 L8 9.5 L14.5 2" fill="none" stroke="#fff" stroke-width="1.8"/></svg>
<div class="a" style="left:1100px;top:598px;width:503.00px;height:125.00px;border:1px solid #e6e6e6;border-radius:0 2px 2px 2px;background:#fff"></div>
<div class="a" style="left:1099.5px;top:549px;width:94.50px;height:50.50px;border:1px solid #e6e6e6;border-bottom:none;border-radius:2px 2px 0 0;background:#fff"></div>
<svg class="a" style="left:1109.3px;top:564.8px" width="21" height="21" viewBox="0 0 24 24"><g fill="none" stroke="#4d9ed8" stroke-width="1.2"><circle cx="12" cy="12" r="3.8"/><circle cx="3.5" cy="3.5" r="2"/><circle cx="14" cy="2.8" r="2"/><circle cx="21" cy="12.5" r="2"/><circle cx="15" cy="21" r="2"/><circle cx="3" cy="18.5" r="2"/><path d="M5 5 L9.3 9.3 M13.5 4.7 L12.8 8.2 M19 12.4 L15.8 12.2 M14.2 19 L13.2 15.6 M4.8 17.5 L9 14"/></g></svg>
<div class="a" style="left:1135.2px;top:564.50px;font-size:17.5px;line-height:24px;color:#179bd7;letter-spacing:0.5px;">配置项</div>
<svg class="a" style="left:1206px;top:565px" width="22" height="22" viewBox="0 0 22 22"><g fill="none" stroke="#333" stroke-width="1.3"><path d="M7 1 L1 1 L1 19.5 L7 19.5"/><path d="M7 1 L20 1 L20 7.5"/><path d="M4.5 6 L13 6 M4.5 10.5 L11 10.5 M4.5 15 L11 15 M13.5 10.5 L21 10.5 M17.2 10.5 L17.2 19.5"/></g></svg>
<div class="a" style="left:1232.2px;top:564.50px;font-size:17.5px;line-height:24px;color:#333;letter-spacing:0.5px;">知识</div>
<div class="a" style="left:1106.8px;top:615.50px;font-size:15.75px;line-height:24px;color:#333;letter-spacing:-0.25px;">关联配置</div>
<svg class="a" style="left:1177px;top:618px" width="16" height="16" viewBox="0 0 16 16"><path d="M8 1 L8 15 M1 8 L15 8" stroke="#333" stroke-width="1.3"/></svg>
<div class="a" style="left:1106.8px;top:640px;width:490.20px;height:1.00px;background:#e6e6e6"></div>
<div class="a" style="left:1115.1px;top:655.00px;font-size:16px;line-height:24px;color:#179bd7;">YJ-ZJ-FWQ00002</div>
<div class="a" style="left:1309px;top:653px;width:84.50px;height:26.50px;border:1px solid #179bd7;border-radius:3px"></div>
<div class="a" style="left:1316px;top:655.00px;font-size:15.75px;line-height:24px;color:#179bd7;letter-spacing:-0.25px;"><span style="letter-spacing:0">OA</span>服务器</div>
<div class="a" style="left:1454px;top:655.00px;font-size:15.75px;line-height:24px;color:#179bd7;letter-spacing:-0.25px;">文先生</div>
<svg class="a" style="left:1568.2px;top:658.5px" width="14" height="14" viewBox="0 0 14 14"><path d="M4.5 2 L4.5 0.7 L9.5 0.7 L9.5 2" fill="none" stroke="#1f9cf0" stroke-width="1.4"/><line x1="0" y1="2.4" x2="14" y2="2.4" stroke="#1f9cf0" stroke-width="1.6"/><path d="M1.6 3 L1.6 12.4 Q1.6 13.3 2.5 13.3 L11.5 13.3 Q12.4 13.3 12.4 12.4 L12.4 3" fill="none" stroke="#1f9cf0" stroke-width="1.5"/><line x1="5" y1="5" x2="5" y2="11.5" stroke="#1f9cf0" stroke-width="1.1"/><line x1="7" y1="5" x2="7" y2="11.5" stroke="#1f9cf0" stroke-width="1.1"/><line x1="9" y1="5" x2="9" y2="11.5" stroke="#1f9cf0" stroke-width="1.1"/></svg>
<div class="a" style="left:1100px;top:790px;width:503.00px;height:160.00px;border:1px solid #e6e6e6;border-radius:0 2px 2px 2px;background:#fff"></div>
<div class="a" style="left:1099.5px;top:741.5px;width:112.00px;height:50.00px;border:1px solid #e6e6e6;border-bottom:none;border-radius:2px 2px 0 0;background:#fff"></div>
<svg class="a" style="left:1109px;top:757px" width="22" height="22" viewBox="0 0 22 22"><g fill="none" stroke="#179bd7" stroke-width="1.1"><rect x="8.5" y="1" width="4.5" height="4.5"/><rect x="1" y="15.5" width="4.5" height="4.5"/><rect x="8.5" y="15.5" width="4.5" height="4.5"/><rect x="16" y="15.5" width="4.5" height="4.5"/><path d="M10.75 5.5 L10.75 15.5 M3.25 15.5 L3.25 11 L18.25 11 L18.25 15.5"/></g></svg>
<div class="a" style="left:1135.2px;top:755.50px;font-size:17.5px;line-height:24px;color:#179bd7;letter-spacing:0.5px;">关联工单</div>
<svg class="a" style="left:1220px;top:758px" width="19" height="19" viewBox="0 0 19 19"><g fill="none" stroke="#333" stroke-width="1.4"><path d="M8 6.5 L10.5 4 Q12.5 2 14.5 4 Q16.5 6 14.5 8 L12 10.5"/><path d="M11 12.5 L8.5 15 Q6.5 17 4.5 15 Q2.5 13 4.5 11 L7 8.5"/><path d="M7 12 L12 7"/></g></svg>
<div class="a" style="left:1249px;top:755.50px;font-size:17.5px;line-height:24px;color:#333;letter-spacing:0.5px;">附件</div>
<div class="a" style="left:1113.5px;top:806px;width:112.50px;height:34.00px;border:1px solid #dce3e8;border-radius:3px;background:#fff"></div>
<div class="a" style="left:1122.8px;top:812.80px;font-size:15.75px;line-height:24px;color:#757575;letter-spacing:-0.25px;">变更管理</div>
<svg class="a" style="left:1207px;top:819px" width="12" height="9" viewBox="0 0 12 9"><path d="M1.5 1.5 L6 6 L10.5 1.5" fill="none" stroke="#555" stroke-width="1.4"/></svg>
<div class="a" style="left:1233px;top:806px;width:179.50px;height:34.00px;border:1px solid #dce3e8;border-radius:3px;background:#fff"></div>
<div class="a" style="left:1242.3px;top:812.80px;font-size:15.75px;line-height:24px;color:#757575;letter-spacing:-0.25px;">默认关系</div>
<svg class="a" style="left:1394px;top:819px" width="12" height="9" viewBox="0 0 12 9"><path d="M1.5 1.5 L6 6 L10.5 1.5" fill="none" stroke="#555" stroke-width="1.4"/></svg>
<svg class="a" style="left:1420.5px;top:815.5px" width="16" height="16" viewBox="0 0 16 16"><path d="M8 0.5 L8 15.5 M0.5 8 L15.5 8" stroke="#333" stroke-width="1.3"/></svg>
<svg class="a" style="left:1448px;top:817px" width="18" height="14" viewBox="0 0 18 14"><g fill="none" stroke="#333" stroke-width="1.8"><path d="M0.5 3.5 L3.5 3.5 Q6 3.5 8 7 Q10 10.5 12.5 10.5 L15 10.5"/><path d="M0.5 10.5 L3.5 10.5 Q6 10.5 8 7 Q10 3.5 12.5 3.5 L15 3.5"/></g><path d="M13.5 0.5 L17.5 3.5 L13.5 6.5 Z M13.5 7.5 L17.5 10.5 L13.5 13.5 Z" fill="#333"/></svg>
<div class="a" style="left:1119.5px;top:849.10px;font-size:15.75px;line-height:24px;color:#1a9de6;letter-spacing:-0.25px;">应用故障无法使用：服<span style="letter-spacing:0">...</span></div>
<div class="a" style="left:1343.3px;top:847.2px;width:75.30px;height:26.40px;border:1px solid #1a9de6;border-radius:3px"></div>
<div class="a" style="left:1349.5px;top:849.10px;font-size:15.75px;line-height:24px;color:#1a9de6;letter-spacing:-0.25px;">问题审核</div>
<div class="a" style="left:1478px;top:849.10px;font-size:15.75px;line-height:24px;color:#1a9de6;letter-spacing:-0.25px;">管理员</div>
<svg class="a" style="left:1573.4px;top:852.8px" width="14" height="14" viewBox="0 0 14 14"><path d="M4.5 2 L4.5 0.7 L9.5 0.7 L9.5 2" fill="none" stroke="#1f9cf0" stroke-width="1.4"/><line x1="0" y1="2.4" x2="14" y2="2.4" stroke="#1f9cf0" stroke-width="1.6"/><path d="M1.6 3 L1.6 12.4 Q1.6 13.3 2.5 13.3 L11.5 13.3 Q12.4 13.3 12.4 12.4 L12.4 3" fill="none" stroke="#1f9cf0" stroke-width="1.5"/><line x1="5" y1="5" x2="5" y2="11.5" stroke="#1f9cf0" stroke-width="1.1"/><line x1="7" y1="5" x2="7" y2="11.5" stroke="#1f9cf0" stroke-width="1.1"/><line x1="9" y1="5" x2="9" y2="11.5" stroke="#1f9cf0" stroke-width="1.1"/></svg>
<div class="a" style="left:1119.5px;top:887.10px;font-size:15.75px;line-height:24px;color:#1a9de6;letter-spacing:-0.25px;">路由系统故障无法访问</div>
<div class="a" style="left:1359.4px;top:885.3px;width:44.10px;height:26.70px;border:1px solid #1a9de6;border-radius:3px"></div>
<div class="a" style="left:1365.5px;top:887.10px;font-size:15.75px;line-height:24px;color:#1a9de6;letter-spacing:-0.25px;">结束</div>
<div class="a" style="left:1478px;top:887.10px;font-size:15.75px;line-height:24px;color:#1a9de6;letter-spacing:-0.25px;">管理员</div>
<svg class="a" style="left:1573.4px;top:891.3px" width="14" height="14" viewBox="0 0 14 14"><path d="M4.5 2 L4.5 0.7 L9.5 0.7 L9.5 2" fill="none" stroke="#1f9cf0" stroke-width="1.4"/><line x1="0" y1="2.4" x2="14" y2="2.4" stroke="#1f9cf0" stroke-width="1.6"/><path d="M1.6 3 L1.6 12.4 Q1.6 13.3 2.5 13.3 L11.5 13.3 Q12.4 13.3 12.4 12.4 L12.4 3" fill="none" stroke="#1f9cf0" stroke-width="1.5"/><line x1="5" y1="5" x2="5" y2="11.5" stroke="#1f9cf0" stroke-width="1.1"/><line x1="7" y1="5" x2="7" y2="11.5" stroke="#1f9cf0" stroke-width="1.1"/><line x1="9" y1="5" x2="9" y2="11.5" stroke="#1f9cf0" stroke-width="1.1"/></svg>
</body></html>
